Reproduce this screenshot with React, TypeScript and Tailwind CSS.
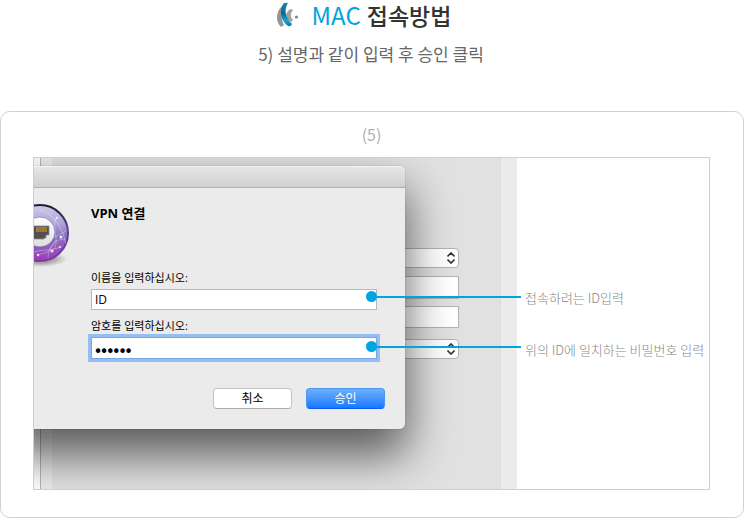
const notes = ["접속하려는 ID입력", "위의 ID에 일치하는 비밀번호 입력"];

function Logo() {
  return (
    <svg viewBox="0 0 24 26" className="w-6 h-[26px]" aria-hidden="true">
      <defs>
        <linearGradient id="logoBlue" x1="0" y1="0" x2="0" y2="1">
          <stop offset="0" stopColor="#1787b2" />
          <stop offset="0.45" stopColor="#07698f" />
          <stop offset="0.75" stopColor="#12a3d5" />
          <stop offset="1" stopColor="#087aa5" />
        </linearGradient>
      </defs>
      <path d="M5 4C1 8 0 12 0 16C0 20 2 23 4 25L7 23C4 18 4 10 7 5Z" fill="#949494" />
      <path d="M14 7C11 8 9 11 9 14C10 17 12 19 14 20L16 18C13 15 13 12 16 8Z" fill="#a0a0a0" />
      <path d="M6 2Q8 0 11 1C8 6 8 11 10 15Q12 20 15 22Q14 25 11 24C4 19 2 10 6 2Z" fill="url(#logoBlue)" />
      <circle cx="19.5" cy="15" r="1.6" fill="#858585" />
    </svg>
  );
}

function NetworkIcon() {
  return (
    <svg viewBox="0 0 36 66" className="w-9 h-[66px] shrink-0" aria-hidden="true">
      <defs>
        <linearGradient id="globe" x1="0" y1="0" x2="0" y2="1">
          <stop offset="0" stopColor="#cfcbe8" />
          <stop offset="0.3" stopColor="#b3a8da" />
          <stop offset="0.55" stopColor="#8a72c0" />
          <stop offset="1" stopColor="#9c3cba" />
        </linearGradient>
        <linearGradient id="rim" x1="0" y1="0" x2="0" y2="1">
          <stop offset="0" stopColor="#1e1838" />
          <stop offset="0.4" stopColor="#54418e" />
          <stop offset="1" stopColor="#7d3a9c" />
        </linearGradient>
        <radialGradient id="globeShadow">
          <stop offset="0.5" stopColor="#777777" stopOpacity="0.6" />
          <stop offset="1" stopColor="#777777" stopOpacity="0" />
        </radialGradient>
        <linearGradient id="disc" x1="0" y1="0" x2="0" y2="1">
          <stop offset="0" stopColor="#ffffff" />
          <stop offset="1" stopColor="#dddddd" />
        </linearGradient>
      </defs>
      <ellipse cx="6" cy="57" rx="27" ry="8" fill="url(#globeShadow)" />
      <circle cx="6" cy="31" r="28" fill="url(#globe)" stroke="url(#rim)" strokeWidth="2" />
      <g fill="none" stroke="#ffffff" strokeOpacity="0.4" strokeWidth="0.8">
        <path d="M6 8C18 11 28 24 32 42M23 14C16 26 28 40 18 49M31 38C22 35 14 46 14 56M0 50C10 47 18 49 26 45M21 35L32 29M4 53L14 50L22 38" />
      </g>
      <g fill="#ffffff" fillOpacity="0.85">
        <circle cx="23" cy="16" r="1" />
        <circle cx="27" cy="35" r="1.5" />
        <circle cx="18" cy="49" r="1.5" />
        <circle cx="4" cy="53" r="1.2" />
        <circle cx="26" cy="45" r="1" />
      </g>
      <circle cx="6" cy="30" r="15" fill="url(#disc)" stroke="#6d5da0" strokeOpacity="0.6" />
      <path d="M-2 24H15V33H12V36H10V37H0V36H-2Z" fill="#505050" stroke="#8a8a8a" strokeWidth="0.8" />
      <path d="M2 25H13V30H2Z" fill="#a07c38" />
      <path d="M5 25V30M8 25V30M11 25V30" stroke="#866428" strokeWidth="0.6" />
    </svg>
  );
}

function BackgroundSelect({ label }: { label: string }) {
  return (
    <div className="grid h-5 items-center">
      <select
        aria-label={label}
        className="col-start-1 row-start-1 h-5 w-full appearance-none rounded-[4px] border border-[#b3b3b3] bg-white"
      />
      <svg
        viewBox="0 0 8 12"
        className="pointer-events-none col-start-1 row-start-1 mr-1 h-3 w-2 justify-self-end"
        fill="none"
        stroke="#333333"
        strokeWidth="1.6"
        aria-hidden="true"
      >
        <path d="M0.5 4.5L4 1L7.5 4.5M0.5 7.5L4 11L7.5 7.5" />
      </svg>
    </div>
  );
}

function SettingsWindow() {
  return (
    <div className="flex w-full">
      <div className="w-[7px] border-r border-[#b5b5b5] bg-white" />
      <div className="w-[11px] bg-[#ebebeb]" />
      <div className="flex flex-1 flex-col bg-[#e1e1e1] pt-[90px] pr-[41px] pb-[130px] pl-40">
        <BackgroundSelect label="구성" />
        <input aria-label="서버 주소" className="mt-2 h-[23px] border border-[#b3b3b3] bg-white" />
        <input aria-label="계정 이름" className="mt-[7px] mb-[11px] h-[22px] border border-[#b3b3b3] bg-white" />
        <BackgroundSelect label="암호화" />
      </div>
      <div className="w-[17px] border-l border-[#dcdcdc] bg-[#ebebeb]" />
    </div>
  );
}

// The dialog runs past the left edge of the frame, which clips it
function VpnDialog() {
  return (
    <div
      role="dialog"
      aria-labelledby="vpn-title"
      className="absolute top-2 -left-20 w-[451px] rounded-[5px] bg-[#ebebeb] font-['Open_Sans','Noto_Sans_CJK_KR',sans-serif] text-xs text-black shadow-[0_0_1px_rgba(0,0,0,0.5),0_24px_46px_2px_rgba(0,0,0,0.6)]"
    >
      <div className="h-[22px] rounded-t-[5px] border-t border-b border-t-[#f5f5f5] border-b-[#b1b1b1] bg-linear-to-b from-[#e6e6e6] to-[#d0d0d0]" />
      <form className="pt-3.5 pr-5 pb-5 pl-20" onSubmit={(e) => e.preventDefault()}>
        <div className="flex items-start">
          <NetworkIcon />
          <div className="ml-[21px] flex w-[286px] flex-col">
            <h2 id="vpn-title" className="mt-px text-[13px] leading-5 font-bold">VPN 연결</h2>
            <label htmlFor="vpn-name" className="mt-[46px] text-[11px] leading-[18px]">이름을 입력하십시오:</label>
            <input
              id="vpn-name"
              defaultValue="ID"
              className="mt-0.5 h-[21px] border border-[#b8b8b8] bg-white px-[3px] text-xs outline-none"
            />
            <label htmlFor="vpn-password" className="mt-[7px] text-[11px] leading-[18px]">암호를 입력하십시오:</label>
            <input
              id="vpn-password"
              type="password"
              defaultValue="secret"
              className="mt-0.5 h-[22px] border border-[#78a6df] bg-white px-[3px] font-['Noto_Sans_CJK_KR',sans-serif] text-lg ring-3 ring-[#95bff4] outline-none"
            />
          </div>
        </div>
        <div className="mt-[29px] flex justify-end gap-3.5">
          <button
            type="button"
            className="h-[21px] w-[79px] rounded-[4px] border border-[#c3c3c3] border-b-[#adadad] bg-white leading-[19px]"
          >
            취소
          </button>
          <button
            type="submit"
            className="h-[21px] w-[79px] rounded-[4px] border border-[#4a98f0] border-b-[#0a5ff0] bg-linear-to-b from-[#6cb0fa] to-[#1577ff] leading-[19px] text-white"
          >
            승인
          </button>
        </div>
      </form>
    </div>
  );
}

function Pointer() {
  return (
    <div className="flex items-center">
      <span className="size-[11px] rounded-full bg-[#00a5e0]" />
      <span className="h-0.5 flex-1 bg-[#00a5e0]" />
    </div>
  );
}

export default function App() {
  return (
    <main className="bg-white font-['Noto_Sans_CJK_KR',sans-serif] text-[#666666]">
      <header className="text-center">
        <h1 className="flex items-center justify-center pr-4 text-[23px] leading-[30px] font-medium text-[#333333]">
          <Logo />
          <span className="mr-1.5 ml-[11px] text-2xl leading-[30px] font-normal text-[#00a5e0]">MAC</span>
          접속방법
        </h1>
        <p className="mt-2.5 pr-0.5 text-[17px] leading-7">5) 설명과 같이 입력 후 승인 클릭</p>
      </header>

      <section className="mt-[43px] rounded-[10px] border border-[#d0d0d0] pt-2.5 pr-[33px] pb-[27px] pl-8">
        <p className="text-center text-base leading-6 text-[#b0b0b0]">(5)</p>
        <div className="relative mt-[11px] flex border border-[#cfcfcf]">
          <div className="relative flex w-[483px] shrink-0 overflow-hidden">
            <SettingsWindow />
            <VpnDialog />
          </div>
          <ul className="flex-1 pt-[130px] pl-2 text-[13px] leading-5 font-light whitespace-nowrap text-[#888888]">
            {notes.map((note) => (
              <li key={note} className="mb-8">{note}</li>
            ))}
          </ul>
          {/* leader lines from the text boxes to their notes */}
          <div className="absolute top-[133px] left-[332px] flex w-[155px] flex-col gap-[39px]">
            <Pointer />
            <Pointer />
          </div>
        </div>
      </section>
    </main>
  );
}
